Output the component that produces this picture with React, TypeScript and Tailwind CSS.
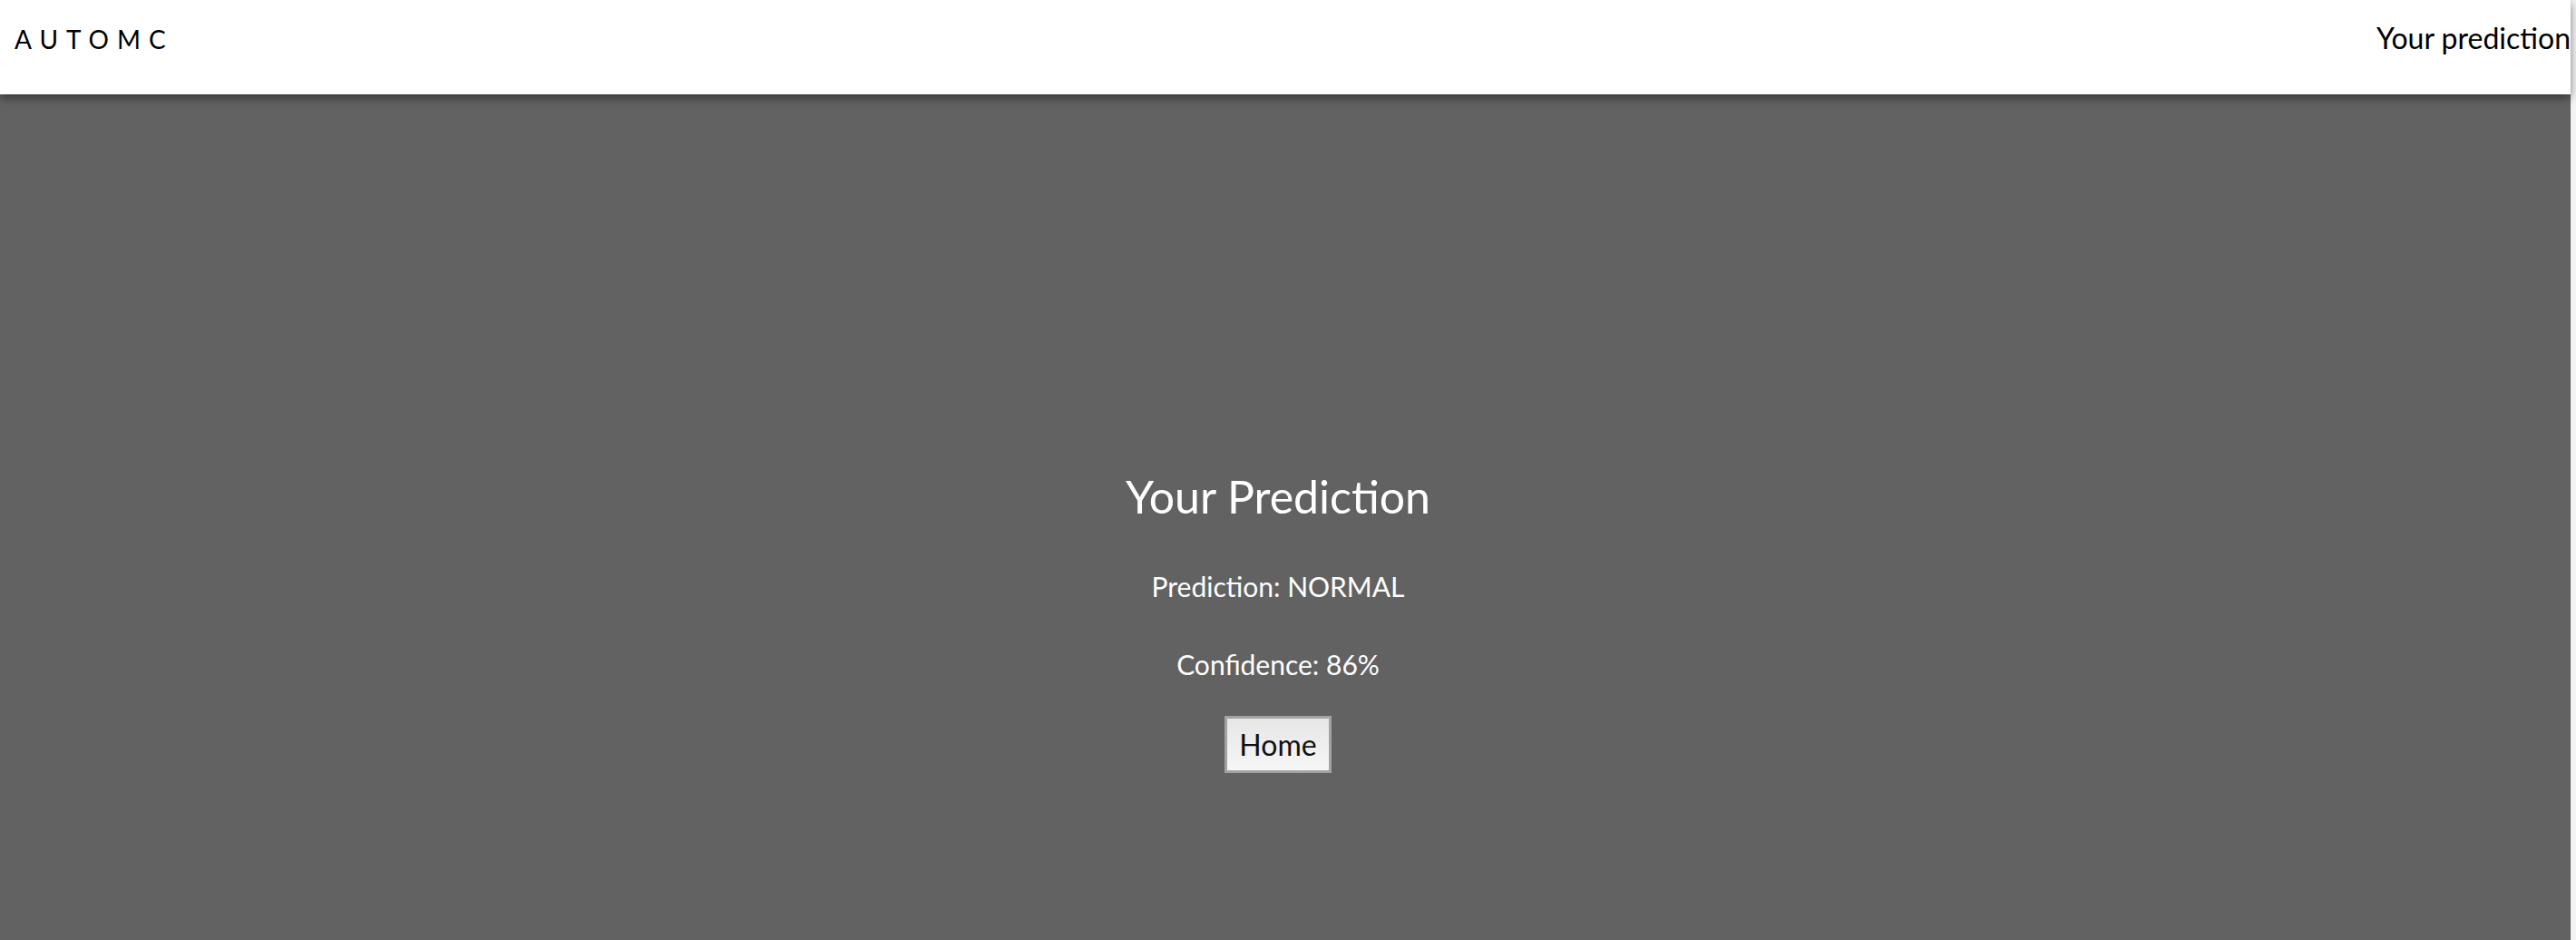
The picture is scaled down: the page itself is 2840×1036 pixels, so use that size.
export default function App() {
  return (
    <div className="flex h-[1036px] w-full overflow-hidden bg-[#626262] font-['Lato',sans-serif]">
      <div className="flex min-w-0 flex-1 flex-col">
        <header className="relative z-10 flex h-[104px] shrink-0 items-start justify-between bg-white shadow-[0_4px_10px_rgba(0,0,0,0.45)]">
          <span className="ml-[16px] mt-[26px] text-[28px] leading-[34px] tracking-[0.32em] text-black">AUTOMC</span>
          <span className="mt-[22px] text-[32px] leading-[40px] text-black">Your prediction</span>
        </header>
        <main className="flex flex-1 flex-col items-center pr-[16px] pt-[413px] text-center text-white">
          <h1 className="text-[50px] leading-[60px]">Your Prediction</h1>
          <p className="mt-[51px] text-[30px] leading-[36px]">Prediction: NORMAL</p>
          <p className="mt-[50px] text-[30px] leading-[36px]">Confidence: 86%</p>
          <button className="mt-[39px] h-[63px] w-[118px] border-[3px] border-[#a3a3a3] bg-gradient-to-b from-[#e6e6e6] to-[#f6f6f6] text-[32px] leading-none text-[#111]">
            Home
          </button>
        </main>
      </div>
      <div className="w-[6px] shrink-0 border-l border-[#e8e8e8] bg-[#f4f4f4]" />
    </div>
  );
}
